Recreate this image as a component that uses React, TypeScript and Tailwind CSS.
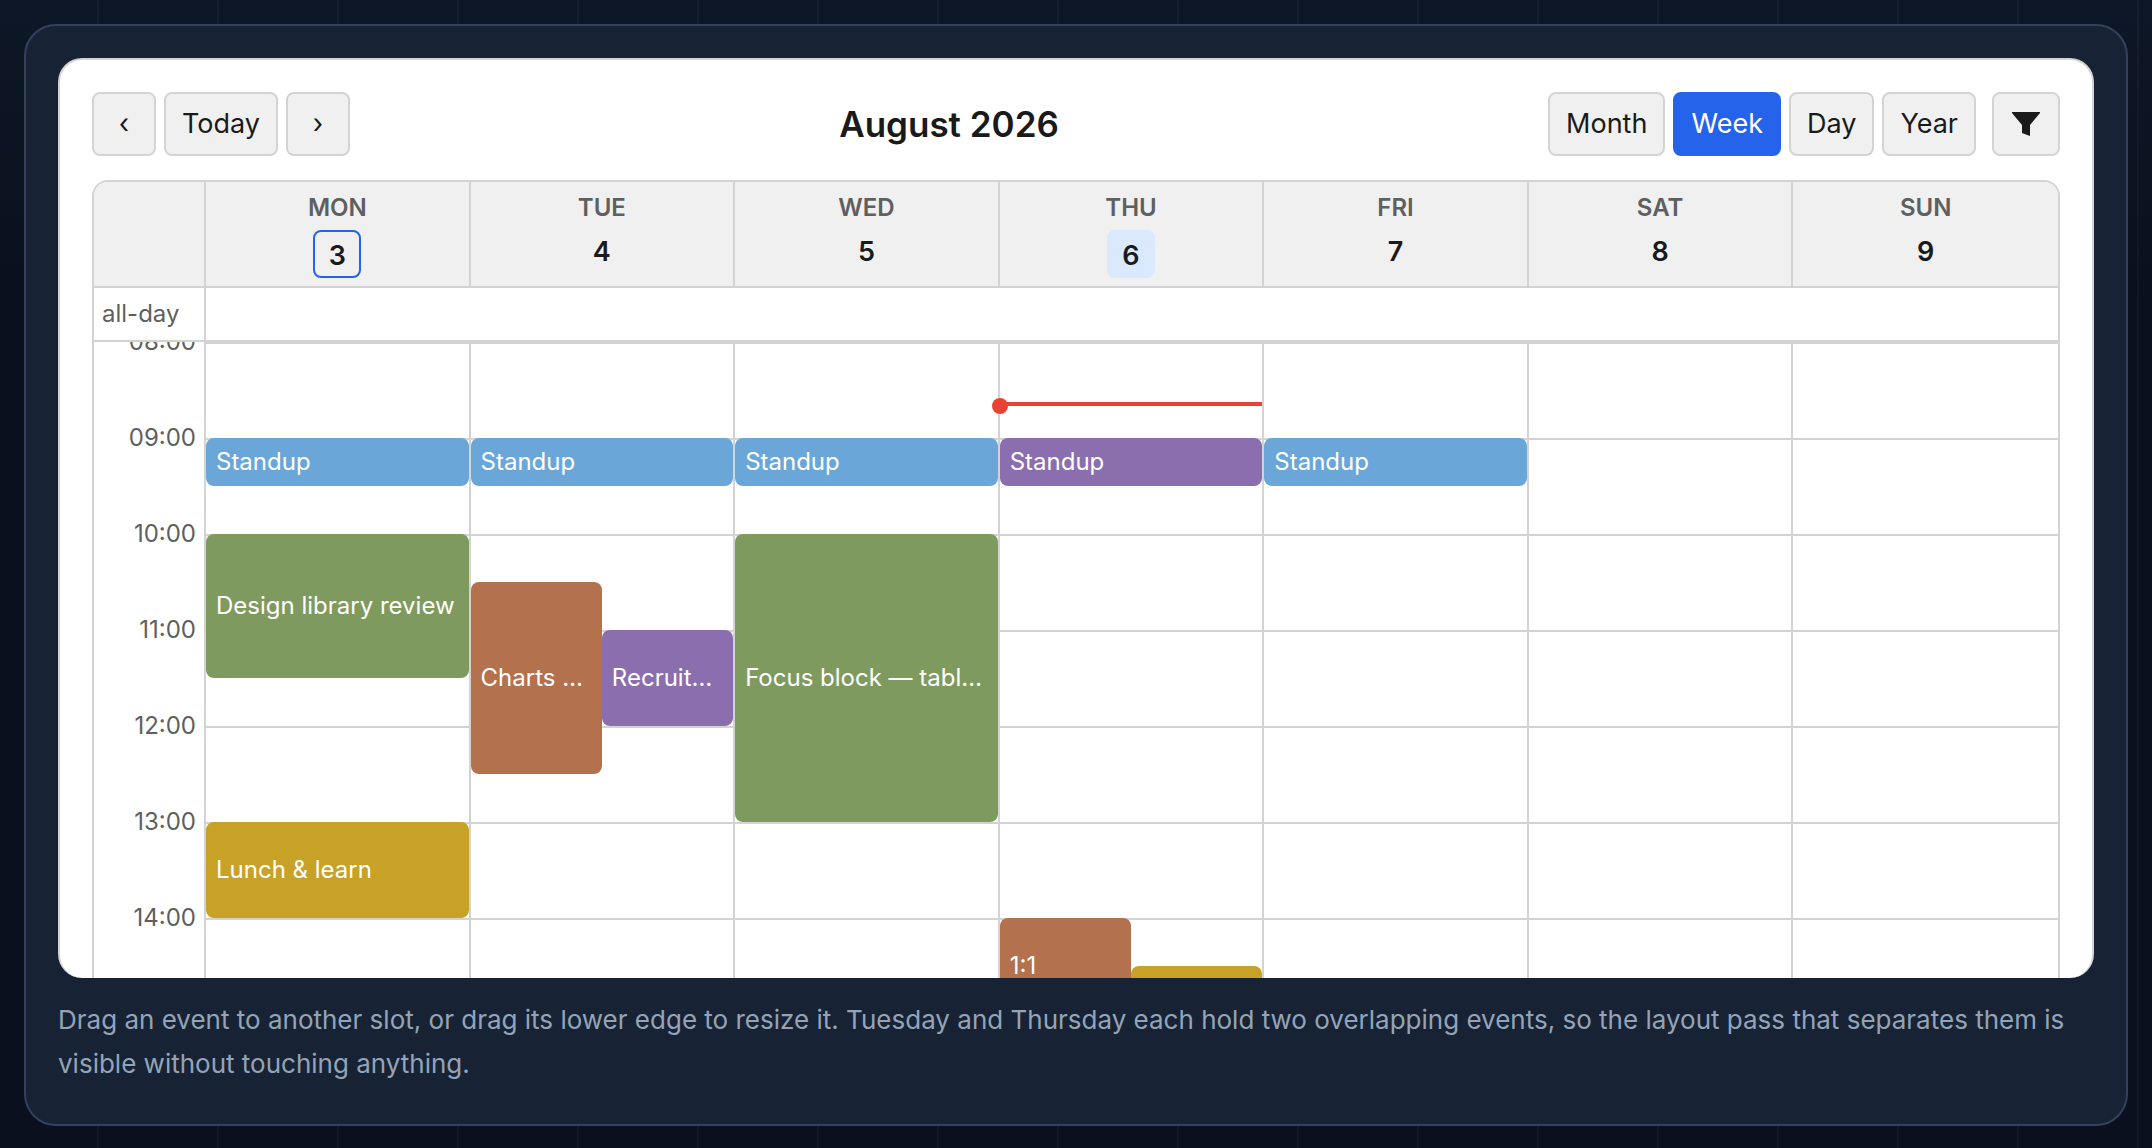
import { useState } from "react";

const HOUR_HEIGHT = 96;
const FIRST_HOUR = 8;
const HOURS = [8, 9, 10, 11, 12, 13, 14];
const VIEWS = ["Month", "Week", "Day", "Year"];

const DAYS = [
  { name: "MON", date: 3 },
  { name: "TUE", date: 4 },
  { name: "WED", date: 5 },
  { name: "THU", date: 6 },
  { name: "FRI", date: 7 },
  { name: "SAT", date: 8 },
  { name: "SUN", date: 9 },
];

const SELECTED = 3;
const TODAY = 6;
const NOW = 8.625;

type CalendarEvent = {
  date: number;
  title: string;
  start: number;
  end: number;
  color: string;
  lane?: number;
  lanes?: number;
};

const BLUE = "bg-[#6aa7d8]";
const PURPLE = "bg-[#8a6eae]";
const GREEN = "bg-[#7f9a5e]";
const RUST = "bg-[#b4714e]";
const GOLD = "bg-[#c7a227]";

const EVENTS: CalendarEvent[] = [
  { date: 3, title: "Standup", start: 9, end: 9.5, color: BLUE },
  { date: 3, title: "Design library review", start: 10, end: 11.5, color: GREEN },
  { date: 3, title: "Lunch & learn", start: 13, end: 14, color: GOLD },
  { date: 4, title: "Standup", start: 9, end: 9.5, color: BLUE },
  { date: 4, title: "Charts sync", start: 10.5, end: 12.5, color: RUST, lane: 0, lanes: 2 },
  { date: 4, title: "Recruitment", start: 11, end: 12, color: PURPLE, lane: 1, lanes: 2 },
  { date: 5, title: "Standup", start: 9, end: 9.5, color: BLUE },
  { date: 5, title: "Focus block — table work", start: 10, end: 13, color: GREEN },
  { date: 6, title: "Standup", start: 9, end: 9.5, color: PURPLE },
  { date: 6, title: "1:1", start: 14, end: 15, color: RUST, lane: 0, lanes: 2 },
  { date: 6, title: "", start: 14.5, end: 15.5, color: GOLD, lane: 1, lanes: 2 },
  { date: 7, title: "Standup", start: 9, end: 9.5, color: BLUE },
];

const button = "h-16 rounded-lg border-2 px-4 text-[27px]";
const plain = "border-[#d3d3d3] bg-[#f0f0f0] text-[#1a1a1a]";

function EventBlock({ event }: { event: CalendarEvent }) {
  const { start, end, lane = 0, lanes = 1 } = event;
  return (
    <div
      className={`absolute flex items-center overflow-hidden rounded-lg px-[10px] text-2xl text-white ${event.color}`}
      style={{
        top: (start - FIRST_HOUR) * HOUR_HEIGHT,
        height: (end - start) * HOUR_HEIGHT,
        left: `${(lane / lanes) * 100}%`,
        width: `${100 / lanes}%`,
      }}
    >
      <span className="truncate">{event.title}</span>
    </div>
  );
}

function DayColumn({ date }: { date: number }) {
  return (
    <div className="relative border-r-2 border-[#d3d3d3] last:border-r-0">
      {HOURS.map((hour) => (
        <div key={hour} className="h-24 border-t-2 border-[#d3d3d3]" />
      ))}
      {EVENTS.filter((event) => event.date === date).map((event) => (
        <EventBlock key={event.title + event.start} event={event} />
      ))}
      {date === TODAY && (
        <div
          className="absolute inset-x-0 h-1 bg-[#e94235]"
          style={{ top: (NOW - FIRST_HOUR) * HOUR_HEIGHT }}
        >
          <span className="absolute -top-1 -left-2 size-4 rounded-full bg-[#e94235]" />
        </div>
      )}
    </div>
  );
}

function Toolbar() {
  const [view, setView] = useState("Week");

  return (
    <div className="flex items-center justify-between">
      <div className="flex gap-2">
        <button aria-label="Previous week" className={`w-16 ${button} ${plain}`}>‹</button>
        <button className={`${button} ${plain}`}>Today</button>
        <button aria-label="Next week" className={`w-16 ${button} ${plain}`}>›</button>
      </div>
      <h1 className="text-[35px] font-semibold">August 2026</h1>
      <div className="flex gap-4">
        <div className="flex gap-2">
          {VIEWS.map((name) => (
            <button
              key={name}
              onClick={() => setView(name)}
              className={`${button} ${name === view ? "border-[#2563eb] bg-[#2563eb] text-white" : plain}`}
            >
              {name}
            </button>
          ))}
        </div>
        <button aria-label="Filter" className={`flex w-[68px] items-center justify-center ${button} ${plain}`}>
          <svg viewBox="0 0 28 24" className="h-6 w-7 shrink-0" fill="currentColor">
            <path d="M0 0h28v1L18 13v11l-8-3v-8L0 1z" />
          </svg>
        </button>
      </div>
    </div>
  );
}

export default function App() {
  return (
    <main className="min-h-screen bg-[#0a101d] bg-[repeating-linear-gradient(90deg,#94a3b80d_0_2px,transparent_2px_120px),linear-gradient(#0e1727,#0a101d_300px)] bg-[position:97px_0,0_0] p-6 pb-[22px] font-['Inter',sans-serif]">
      <section className="rounded-[32px] border-2 border-[#33415f] bg-[#172334] px-8 pt-8 pb-[38px]">
        <div className="h-[920px] overflow-hidden rounded-3xl border-2 border-b-0 border-[#d3d3d3] bg-white p-8 text-[#1a1a1a]">
          <Toolbar />

          <div className="mt-6 overflow-hidden rounded-t-2xl border-2 border-b-0 border-[#d3d3d3]">
            <div className="flex h-[106px] border-b-2 border-[#d3d3d3] bg-[#f0f0f0]">
              <div className="w-28 shrink-0 border-r-2 border-[#d3d3d3]" />
              <div className="grid grow grid-cols-7">
                {DAYS.map(({ name, date }) => (
                  <div
                    key={name}
                    className="flex flex-col items-center border-r-2 border-[#d3d3d3] pt-2 last:border-r-0"
                  >
                    <span className="text-2xl leading-9 font-semibold text-[#5f5f5f]">{name}</span>
                    {date === SELECTED || date === TODAY ? (
                      <span
                        className={`mt-1 flex size-12 items-center justify-center rounded-lg border-2 pt-1 text-[27px] font-semibold ${
                          date === TODAY ? "border-[#dbe9fe] bg-[#dbe9fe]" : "border-[#2563eb]"
                        }`}
                      >
                        {date}
                      </span>
                    ) : (
                      <span className="mt-1 text-[27px] leading-[44px] font-semibold">{date}</span>
                    )}
                  </div>
                ))}
              </div>
            </div>

            <div className="flex h-[54px] border-b-2 border-[#d3d3d3]">
              <div className="flex w-28 shrink-0 items-center border-r-2 border-[#d3d3d3] pl-2 text-2xl text-[#5f5f5f]">
                all-day
              </div>
            </div>

            <div className="flex h-[672px] overflow-hidden">
              <div className="w-28 shrink-0 border-r-2 border-[#d3d3d3] pr-2 text-right text-2xl leading-8 text-[#5f5f5f]">
                <div className="-mt-4">
                  {HOURS.map((hour) => (
                    <div key={hour} className="h-24">
                      {String(hour).padStart(2, "0")}:00
                    </div>
                  ))}
                </div>
              </div>
              <div className="grid grow grid-cols-7">
                {DAYS.map(({ date }) => (
                  <DayColumn key={date} date={date} />
                ))}
              </div>
            </div>
          </div>
        </div>

        <p className="mt-5 text-[26px] leading-[44px] text-[#94a3b8]">
          Drag an event to another slot, or drag its lower edge to resize it. Tuesday and Thursday each hold two
          overlapping events, so the layout pass that separates them is visible without touching anything.
        </p>
      </section>
    </main>
  );
}
